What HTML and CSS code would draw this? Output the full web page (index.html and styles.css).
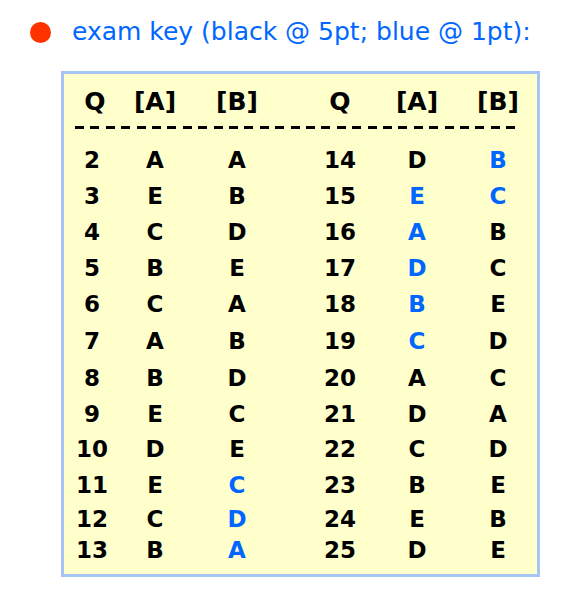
FILE: index.html
```html
<!DOCTYPE html>
<html>
<head>
<meta charset="utf-8">
<link rel="stylesheet" href="styles.css">
</head>
<body>
<div class="heading">
  <span class="bullet"></span>
  <span class="title">exam key (black @ 5pt; blue @ 1pt):</span>
</div>
<div class="box">
  <div class="grid head">
    <span class="hq">Q</span><span>[A]</span><span>[B]</span><span>Q</span><span>[A]</span><span>[B]</span>
  </div>
  <div class="dashes"></div>
  <div class="grid body">
    <span class="q">2</span><span>A</span><span>A</span><span class="q">14</span><span>D</span><span class="b">B</span>
    <span class="q">3</span><span>E</span><span>B</span><span class="q">15</span><span class="b">E</span><span class="b">C</span>
    <span class="q">4</span><span>C</span><span>D</span><span class="q">16</span><span class="b">A</span><span>B</span>
    <span class="q">5</span><span>B</span><span>E</span><span class="q">17</span><span class="b">D</span><span>C</span>
    <span class="q">6</span><span>C</span><span>A</span><span class="q">18</span><span class="b">B</span><span>E</span>
    <span class="q">7</span><span>A</span><span>B</span><span class="q">19</span><span class="b">C</span><span>D</span>
    <span class="q">8</span><span>B</span><span>D</span><span class="q">20</span><span>A</span><span>C</span>
    <span class="q">9</span><span>E</span><span>C</span><span class="q">21</span><span>D</span><span>A</span>
    <span class="q">10</span><span>D</span><span>E</span><span class="q">22</span><span>C</span><span>D</span>
    <span class="q">11</span><span>E</span><span class="b">C</span><span class="q">23</span><span>B</span><span>E</span>
    <span class="q">12</span><span>C</span><span class="b">D</span><span class="q">24</span><span>E</span><span>B</span>
    <span class="q">13</span><span>B</span><span class="b">A</span><span class="q">25</span><span>D</span><span>E</span>
  </div>
</div>
</body>
</html>
```
FILE: styles.css
```css
html, body {
  margin: 0;
  padding: 0;
  background: #ffffff;
}
body {
  width: 576px;
  height: 598px;
  overflow: hidden;
  font-family: "DejaVu Sans", sans-serif;
}
.heading {
  display: flex;
  align-items: center;
  padding-top: 17px;
  padding-left: 30px;
  height: 30px;
}
.bullet {
  width: 21px;
  height: 21px;
  border-radius: 50%;
  background: #ff3300;
  margin-right: 21px;
  flex: none;
}
.title {
  color: #0066ff;
  font-size: 25px;
  line-height: 30px;
  white-space: nowrap;
}
.box {
  margin-top: 24px;
  margin-left: 61px;
  width: 473px;
  height: 492px;
  border: 3px solid #a6c5f4;
  background: #ffffcc;
  padding-top: 8px;
  box-sizing: content-box;
}
.grid {
  display: grid;
  grid-template-columns: 56px 70px 94px 112px 42px 120px;
  justify-items: center;
  color: #000;
  font-weight: bold;
}
.head {
  font-size: 25px;
  line-height: 40px;
  height: 40px;
}
.hq {
  margin-left: 6px;
}
.dashes {
  margin: 4px 0 0 11px;
  width: 447px;
  height: 3px;
  background: repeating-linear-gradient(90deg, #000 0 9px, transparent 9px 15.4px);
}
.body {
  margin-top: 13px;
  font-size: 23px;
  line-height: 36px;
  grid-template-rows: 36px 36px 36px 36px 37px 37px 36px 35px 36px 34px 31px 36px;
  align-items: start;
}
.body span {
  height: 36px;
}
.b {
  color: #0066ff;
}
```
